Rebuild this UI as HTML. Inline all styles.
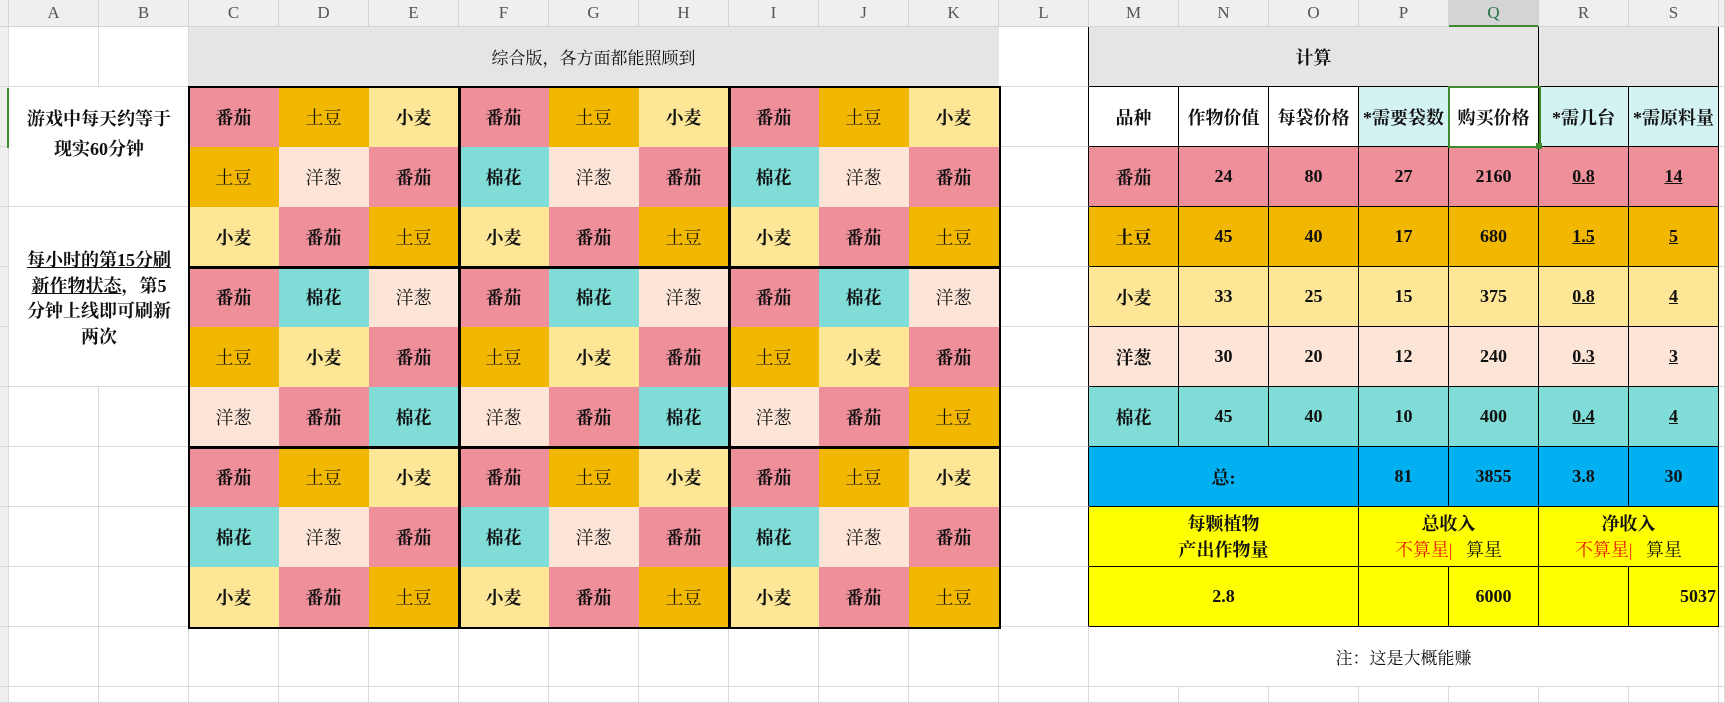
<!DOCTYPE html>
<html><head><meta charset="utf-8">
<style>
*{margin:0;padding:0;box-sizing:border-box}
body{width:1725px;height:703px;overflow:hidden;background:#fff;font-family:"Liberation Serif","Noto Serif CJK SC",serif;position:relative}
table{border-collapse:separate;border-spacing:0;table-layout:fixed;width:1725px;position:absolute;left:0;top:0}
td{border-right:1px solid #dadada;border-bottom:1px solid #dadada;text-align:center;vertical-align:middle;font-size:18px;font-weight:bold;color:#111;overflow:hidden;white-space:nowrap;padding:0}
tr{height:60px}
tr.h{height:27px}
tr.h td{background:#efefef;font-weight:normal;color:#555;font-size:17px;font-family:"Liberation Serif",serif;border-color:#d4d4d4}
tr.l{height:16px}
.t{background:#ee8f9a;border-color:#ee8f9a}
.p{background:#f2b700;border-color:#f2b700;font-weight:normal}
.w{background:#fee697;border-color:#fee697}
.o{background:#fce4d6;border-color:#fce4d6;font-weight:normal}
.c{background:#7fdcd7;border-color:#7fdcd7}
.g{background:#e5e5e5;border-color:#e5e5e5;font-weight:normal}
.b{border-right:1px solid #000;border-bottom:1px solid #000}
.lc{border-right:1px solid #000}
.rt{background:#ee8f9a}.rp{background:#f2b700}.rw{background:#fee697}.ro{background:#fce4d6}.rc{background:#7fdcd7}
.cy{background:#d3f3f3}.wh{background:#fff}
.bl{background:#00b0f0}.yl{background:#ffff00}
u{text-decoration:underline}
.red{color:#e8180c;font-weight:normal}
.ov{position:absolute;border:2px solid #000;pointer-events:none}
</style></head><body>
<table>
<colgroup><col style="width:9px"><col span="19" style="width:90px"><col style="width:6px"></colgroup>
<tr class="h"><td></td><td>A</td><td>B</td><td>C</td><td>D</td><td>E</td><td>F</td><td>G</td><td>H</td><td>I</td><td>J</td><td>K</td><td>L</td><td>M</td><td>N</td><td>O</td><td>P</td><td style="background:#d4d4d4;color:#217346;border-bottom:2px solid #3d8a2f">Q</td><td>R</td><td>S</td><td></td></tr>
<tr><td style="background:#efefef"></td><td></td><td></td><td colspan="9" class="g" style="font-size:17px">综合版，各方面都能照顾到</td><td class="lc"></td><td colspan="5" class="g" style="border-right:1px solid #000;border-bottom:1px solid #000;font-weight:bold">计算</td><td colspan="2" class="g" style="border-bottom:1px solid #000;border-right:1px solid #000"></td><td></td></tr>
<tr><td style="background:#efefef"></td><td colspan="2" rowspan="2"></td><td class="t">番茄</td><td class="p">土豆</td><td class="w">小麦</td><td class="t">番茄</td><td class="p">土豆</td><td class="w">小麦</td><td class="t">番茄</td><td class="p">土豆</td><td class="w">小麦</td><td class="lc"></td>
<td class="b wh">品种</td><td class="b wh">作物价值</td><td class="b wh">每袋价格</td><td class="b cy">*需要袋数</td><td class="b wh">购买价格</td><td class="b cy">*需几台</td><td class="b cy">*需原料量</td><td></td></tr>
<tr><td style="background:#efefef"></td><td class="p">土豆</td><td class="o">洋葱</td><td class="t">番茄</td><td class="c">棉花</td><td class="o">洋葱</td><td class="t">番茄</td><td class="c">棉花</td><td class="o">洋葱</td><td class="t">番茄</td><td class="lc"></td>
<td class="b rt">番茄</td><td class="b rt">24</td><td class="b rt">80</td><td class="b rt">27</td><td class="b rt">2160</td><td class="b rt"><u>0.8</u></td><td class="b rt"><u>14</u></td><td></td></tr>
<tr><td style="background:#efefef"></td><td colspan="2" rowspan="3"></td><td class="w">小麦</td><td class="t">番茄</td><td class="p">土豆</td><td class="w">小麦</td><td class="t">番茄</td><td class="p">土豆</td><td class="w">小麦</td><td class="t">番茄</td><td class="p">土豆</td><td class="lc"></td>
<td class="b rp">土豆</td><td class="b rp">45</td><td class="b rp">40</td><td class="b rp">17</td><td class="b rp">680</td><td class="b rp"><u>1.5</u></td><td class="b rp"><u>5</u></td><td></td></tr>
<tr><td style="background:#efefef"></td><td class="t">番茄</td><td class="c">棉花</td><td class="o">洋葱</td><td class="t">番茄</td><td class="c">棉花</td><td class="o">洋葱</td><td class="t">番茄</td><td class="c">棉花</td><td class="o">洋葱</td><td class="lc"></td>
<td class="b rw">小麦</td><td class="b rw">33</td><td class="b rw">25</td><td class="b rw">15</td><td class="b rw">375</td><td class="b rw"><u>0.8</u></td><td class="b rw"><u>4</u></td><td></td></tr>
<tr><td style="background:#efefef"></td><td class="p">土豆</td><td class="w">小麦</td><td class="t">番茄</td><td class="p">土豆</td><td class="w">小麦</td><td class="t">番茄</td><td class="p">土豆</td><td class="w">小麦</td><td class="t">番茄</td><td class="lc"></td>
<td class="b ro">洋葱</td><td class="b ro">30</td><td class="b ro">20</td><td class="b ro">12</td><td class="b ro">240</td><td class="b ro"><u>0.3</u></td><td class="b ro"><u>3</u></td><td></td></tr>
<tr><td style="background:#efefef"></td><td></td><td></td><td class="o">洋葱</td><td class="t">番茄</td><td class="c">棉花</td><td class="o">洋葱</td><td class="t">番茄</td><td class="c">棉花</td><td class="o">洋葱</td><td class="t">番茄</td><td class="p">土豆</td><td class="lc"></td>
<td class="b rc">棉花</td><td class="b rc">45</td><td class="b rc">40</td><td class="b rc">10</td><td class="b rc">400</td><td class="b rc"><u>0.4</u></td><td class="b rc"><u>4</u></td><td></td></tr>
<tr><td style="background:#efefef"></td><td></td><td></td><td class="t">番茄</td><td class="p">土豆</td><td class="w">小麦</td><td class="t">番茄</td><td class="p">土豆</td><td class="w">小麦</td><td class="t">番茄</td><td class="p">土豆</td><td class="w">小麦</td><td class="lc"></td>
<td colspan="3" class="b bl">总:</td><td class="b bl">81</td><td class="b bl">3855</td><td class="b bl">3.8</td><td class="b bl">30</td><td></td></tr>
<tr><td style="background:#efefef"></td><td></td><td></td><td class="c">棉花</td><td class="o">洋葱</td><td class="t">番茄</td><td class="c">棉花</td><td class="o">洋葱</td><td class="t">番茄</td><td class="c">棉花</td><td class="o">洋葱</td><td class="t">番茄</td><td class="lc"></td>
<td colspan="3" class="b yl" style="line-height:26px">每颗植物<br>产出作物量</td><td colspan="2" class="b yl" style="line-height:26px">总收入<br><span class="red">不算星|</span>&nbsp;&nbsp;&nbsp;<span style="font-weight:normal">算星</span></td><td colspan="2" class="b yl" style="line-height:26px">净收入<br><span class="red">不算星|</span>&nbsp;&nbsp;&nbsp;<span style="font-weight:normal">算星</span></td><td></td></tr>
<tr><td style="background:#efefef"></td><td></td><td></td><td class="w">小麦</td><td class="t">番茄</td><td class="p">土豆</td><td class="w">小麦</td><td class="t">番茄</td><td class="p">土豆</td><td class="w">小麦</td><td class="t">番茄</td><td class="p">土豆</td><td class="lc"></td>
<td colspan="3" class="b yl">2.8</td><td class="b yl"></td><td class="b yl">6000</td><td class="b yl"></td><td class="b yl" style="text-align:right;padding-right:2px">5037</td><td></td></tr>
<tr><td style="background:#efefef"></td><td></td><td></td><td></td><td></td><td></td><td></td><td></td><td></td><td></td><td></td><td></td><td></td><td colspan="7" style="font-weight:normal;font-size:17px">注：这是大概能赚</td><td></td></tr>
<tr class="l"><td style="background:#efefef"></td><td></td><td></td><td></td><td></td><td></td><td></td><td></td><td></td><td></td><td></td><td></td><td></td><td></td><td></td><td></td><td></td><td></td><td></td><td></td><td></td></tr>
</table>
<div class="ov" style="left:188px;top:86px;width:273px;height:183px"></div>
<div class="ov" style="left:458px;top:86px;width:273px;height:183px"></div>
<div class="ov" style="left:728px;top:86px;width:273px;height:183px"></div>
<div class="ov" style="left:188px;top:266px;width:273px;height:183px"></div>
<div class="ov" style="left:458px;top:266px;width:273px;height:183px"></div>
<div class="ov" style="left:728px;top:266px;width:273px;height:183px"></div>
<div class="ov" style="left:188px;top:446px;width:273px;height:183px"></div>
<div class="ov" style="left:458px;top:446px;width:273px;height:183px"></div>
<div class="ov" style="left:728px;top:446px;width:273px;height:183px"></div>
<div style="position:absolute;left:1448px;top:86px;width:93px;height:62px;border:2px solid #3d8a2f"></div>
<div style="position:absolute;left:1536px;top:143px;width:6px;height:6px;background:#3d8a2f"></div>
<div style="position:absolute;left:7px;top:88px;width:2px;height:60px;background:#3d8a2f"></div>
<div style="position:absolute;left:9px;top:104px;width:180px;text-align:center;font-size:18px;font-weight:bold;line-height:30px;color:#111">游戏中每天约等于<br>现实60分钟</div>
<div style="position:absolute;left:9px;top:248px;width:180px;text-align:center;font-size:18px;font-weight:bold;line-height:25.5px;color:#111"><u>每小时的第15分刷</u><br><u>新作物状态</u>，第5<br>分钟上线即可刷新<br>两次</div>
</body></html>
